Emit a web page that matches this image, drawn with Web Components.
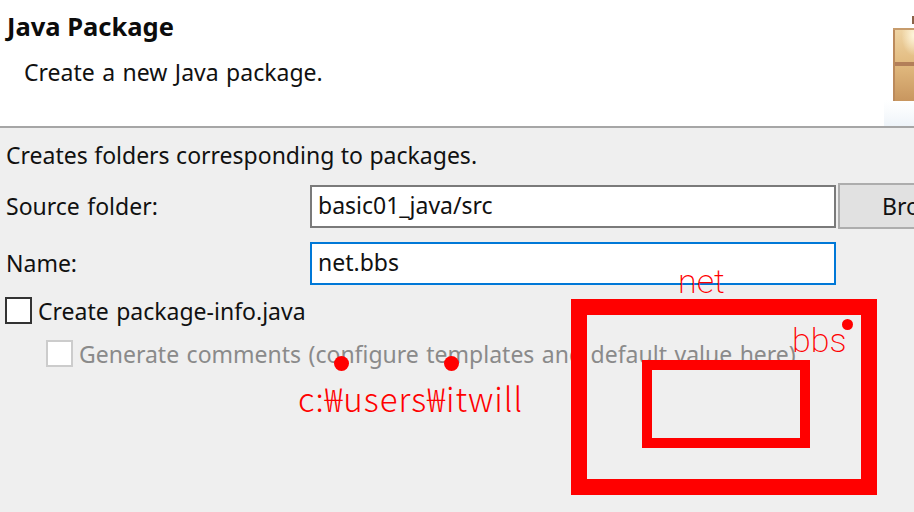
<!DOCTYPE html>
<html>
<head>
<meta charset="utf-8">
<title>Java Package</title>
<style>
  html, body { margin: 0; padding: 0; }
  body {
    width: 914px;
    height: 512px;
    overflow: hidden;
    background: #efefef;
    color: #111;
    font-family: "Noto Sans", "Open Sans", sans-serif;
    font-size: 23px;
    word-spacing: 1.5px;
  }
</style>
</head>
<body>
<package-wizard>
  <wizard-header slot="header" heading="Java Package" description="Create a new Java package."></wizard-header>
  <wizard-note>Creates folders corresponding to packages.</wizard-note>
  <form-row label="Source folder:">
    <text-field value="basic01_java/src"></text-field>
    <browse-button>Browse...</browse-button>
  </form-row>
  <form-row label="Name:" class="name">
    <text-field value="net.bbs" focused></text-field>
  </form-row>
  <check-row>Create package-info.java</check-row>
  <check-row disabled>Generate comments (configure templates and default value here)</check-row>
  <ink-notes slot="overlay"></ink-notes>
</package-wizard>

<script>
class PackageWizard extends HTMLElement {
  constructor() {
    super();
    this.attachShadow({ mode: 'open' });
    this.shadowRoot.innerHTML = `
      <style>
        :host { display: block; position: relative; width: 914px; height: 512px; overflow: hidden; }
        .body { display: flex; flex-direction: column; padding: 12px 0 0 6px; }
      </style>
      <slot name="header"></slot>
      <div class="body"><slot></slot></div>
      <slot name="overlay"></slot>
    `;
  }
}

class WizardHeader extends HTMLElement {
  constructor() {
    super();
    this.attachShadow({ mode: 'open' });
    this.shadowRoot.innerHTML = `
      <style>
        :host { display: flex; box-sizing: border-box; height: 128px; background: #fff; border-bottom: 2px solid #a6a6a6; overflow: hidden; justify-content: space-between; }
        .text { padding: 9px 0 0 7px; }
        h1 { margin: 0; font-size: 25.5px; line-height: 34px; font-weight: 700; color: #0c0c0c; word-spacing: 0; }
        p { margin: 14px 0 0 17px; font-size: 23px; line-height: 30px; color: #111; }
        .glow { flex: none; width: 30px; height: 126px; }
      </style>
      <div class="text"><h1></h1><p></p></div>
      <svg class="glow" viewBox="0 0 30 126" aria-hidden="true">
        <defs>
          <radialGradient id="shine" cx="1" cy=".22" r=".6">
            <stop offset="0" stop-color="#fff6dc"/>
            <stop offset="1" stop-color="#fff6dc" stop-opacity="0"/>
          </radialGradient>
          <linearGradient id="wood" x1="0" y1="0" x2="0" y2="1">
            <stop offset="0" stop-color="#efd5a6"/>
            <stop offset=".48" stop-color="#e2bb80"/>
            <stop offset="1" stop-color="#c8965f"/>
          </linearGradient>
          <linearGradient id="sky" x1="0" y1="0" x2="0" y2="1">
            <stop offset="0" stop-color="#f3f7fb" stop-opacity="0"/>
            <stop offset="1" stop-color="#eef4f9"/>
          </linearGradient>
        </defs>
        <rect x="0" y="100" width="30" height="26" fill="url(#sky)"/>
        <rect x="28" y="16" width="2" height="8" fill="#8a6248"/>
        <rect x="9" y="28" width="21" height="73" fill="url(#wood)"/>
        <rect x="9" y="28" width="21" height="34" fill="url(#shine)"/>
        <rect x="9" y="28" width="2" height="73" fill="#bb8a5c"/>
        <rect x="9" y="28" width="21" height="2" fill="#c79c6c"/>
        <rect x="11" y="62" width="19" height="4" fill="#b37f59"/>
      </svg>
    `;
    this.shadowRoot.querySelector('h1').textContent = this.getAttribute('heading');
    this.shadowRoot.querySelector('p').textContent = this.getAttribute('description');
  }
}

class WizardNote extends HTMLElement {
  constructor() {
    super();
    this.attachShadow({ mode: 'open' });
    this.shadowRoot.innerHTML = `
      <style>
        :host { display: block; height: 43px; line-height: 30px; font-size: 23px; color: #111; word-spacing: .5px; }
      </style>
      <slot></slot>
    `;
  }
}

class FormRow extends HTMLElement {
  constructor() {
    super();
    this.attachShadow({ mode: 'open' });
    this.shadowRoot.innerHTML = `
      <style>
        :host { display: flex; align-items: center; height: 46px; margin-bottom: 11px; font-size: 23px; color: #111; }
        .label { flex: none; width: 304px; }
        .field { display: flex; align-items: flex-start; gap: 2px; flex: 1; min-width: 0; height: 46px; }
      </style>
      <span class="label"></span>
      <div class="field"><slot></slot></div>
    `;
    this.shadowRoot.querySelector('.label').textContent = this.getAttribute('label');
  }
}

class TextField extends HTMLElement {
  constructor() {
    super();
    this.attachShadow({ mode: 'open' });
    this.shadowRoot.innerHTML = `
      <style>
        :host { display: flex; align-items: center; box-sizing: border-box; flex: none; width: 526px; height: 43px; margin-top: 2px; padding: 0 0 4px 6px; background: #fff; border: 2px solid #7a7a7a; font-size: 23px; color: #111; }
        :host([focused]) { border-color: #0078d7; }
      </style>
      <span></span>
    `;
    this.shadowRoot.querySelector('span').textContent = this.getAttribute('value');
  }
}

class BrowseButton extends HTMLElement {
  constructor() {
    super();
    this.attachShadow({ mode: 'open' });
    this.shadowRoot.innerHTML = `
      <style>
        :host { display: flex; align-items: center; box-sizing: border-box; flex: none; width: 160px; height: 46px; padding-left: 42px; background: #e1e1e1; border: 2px solid #adadad; font-size: 23px; color: #111; white-space: nowrap; }
      </style>
      <slot></slot>
    `;
  }
}

class CheckRow extends HTMLElement {
  constructor() {
    super();
    this.attachShadow({ mode: 'open' });
    this.shadowRoot.innerHTML = `
      <style>
        :host { display: flex; align-items: center; gap: 6px; height: 27px; margin: 0 0 16px -1px; font-size: 23px; color: #111; white-space: nowrap; }
        :host([disabled]) { margin: 0 0 0 40px; color: #8a8a8a; }
        .box { flex: none; box-sizing: border-box; width: 27px; height: 27px; background: #fff; border: 2px solid #333; }
        :host([disabled]) .box { border-color: #cccccc; }
      </style>
      <span class="box"></span>
      <span><slot></slot></span>
    `;
  }
}

class InkNotes extends HTMLElement {
  constructor() {
    super();
    this.attachShadow({ mode: 'open' });
    this.shadowRoot.innerHTML = `
      <style>
        :host { display: block; position: absolute; inset: 0; color: #f00; font-family: Roboto, "Liberation Sans", sans-serif; font-weight: 200; font-size: 34px; line-height: 40px; word-spacing: 0; }
        .mark { position: absolute; box-sizing: border-box; border: solid #f00; }
        .outer { left: 571px; top: 299px; width: 306px; height: 196px; border-width: 16px; }
        .inner { left: 642px; top: 360px; width: 168px; height: 88px; border-width: 10px; }
        .dot { position: absolute; border-radius: 50%; background: #f00; }
        .d1 { left: 334px; top: 356px; width: 15px; height: 15px; }
        .d2 { left: 444px; top: 356px; width: 15px; height: 15px; }
        .d3 { left: 842px; top: 319px; width: 11px; height: 11px; }
        .t { position: absolute; white-space: nowrap; }
        .path { left: 298px; top: 378px; letter-spacing: 1px; font-size: 33px; font-family: "Noto Sans CJK KR", "Liberation Sans", sans-serif; font-weight: 300; }
        .net { left: 678px; top: 261px; }
        .bbs { left: 792px; top: 320px; }
      </style>
      <div class="mark outer"></div>
      <div class="mark inner"></div>
      <span class="dot d1"></span>
      <span class="dot d2"></span>
      <span class="dot d3"></span>
      <span class="t path">c:₩users₩itwill</span>
      <span class="t net">net</span>
      <span class="t bbs">bbs</span>
    `;
  }
}

customElements.define('package-wizard', PackageWizard);
customElements.define('wizard-header', WizardHeader);
customElements.define('wizard-note', WizardNote);
customElements.define('form-row', FormRow);
customElements.define('text-field', TextField);
customElements.define('browse-button', BrowseButton);
customElements.define('check-row', CheckRow);
customElements.define('ink-notes', InkNotes);
</script>
</body>
</html>
